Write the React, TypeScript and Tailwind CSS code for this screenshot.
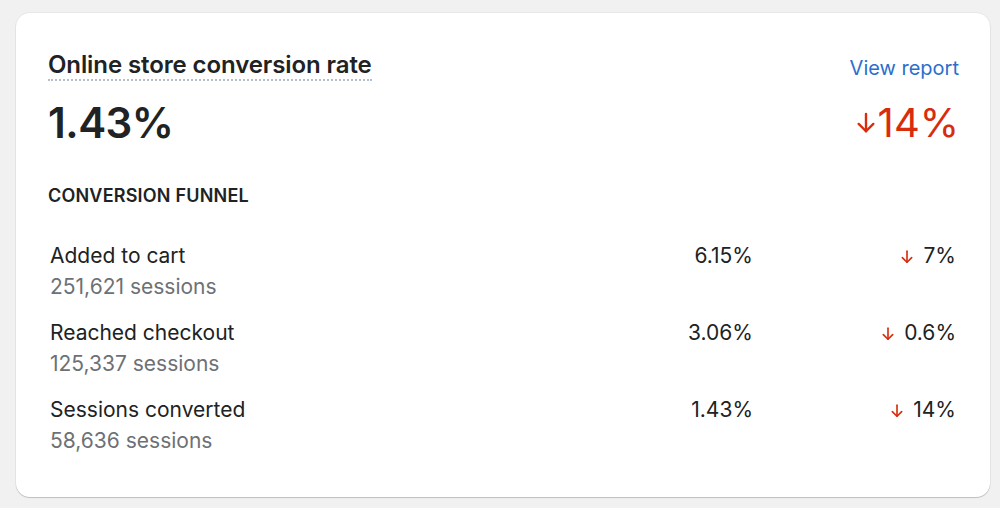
const rows = [
  { label: "Added to cart", sessions: "251,621 sessions", value: "6.15%", change: "7%" },
  { label: "Reached checkout", sessions: "125,337 sessions", value: "3.06%", change: "0.6%" },
  { label: "Sessions converted", sessions: "58,636 sessions", value: "1.43%", change: "14%" },
];

function DownArrow({ className, width = 2.4 }: { className?: string; width?: number }) {
  return (
    <svg viewBox="0 0 24 24" fill="none" stroke="currentColor" strokeWidth={width} strokeLinecap="round" strokeLinejoin="round" className={className}>
      <path d="M12 2v19" />
      <path d="M4 13l8 8 8-8" />
    </svg>
  );
}

export default function App() {
  return (
    <div className="min-h-screen bg-[#f1f1f1] pl-4 pr-[10px] pt-[13px] font-['Inter',sans-serif] text-[#202223]">
      <div className="rounded-[14px] bg-white pl-8 pr-[31px] pt-[38px] pb-[43px] shadow-[0_1px_1px_rgba(0,0,0,0.18),0_0_0_1px_rgba(0,0,0,0.04)]">
        <div className="flex items-start justify-between">
          <h2 className="border-b-2 border-dotted border-[#b4bfcc] text-[24px] font-semibold leading-[28px] tracking-[-0.1px]">
            Online store conversion rate
          </h2>
          <a className="mt-[3px] text-[20px] leading-[28px] text-[#2c6ecb]">View report</a>
        </div>
        <div className="mt-[15px] flex items-center justify-between">
          <div className="text-[42px] font-semibold leading-[52px] tracking-[-0.5px]">1.43%</div>
          <div className="flex items-center text-[40px] leading-[52px] text-[#d82c0d]">
            <DownArrow className="mr-[1px] h-[30px] w-[22px]" width={2.6} />
            14%
          </div>
        </div>
        <div className="mt-[35px] text-[18px] font-semibold uppercase leading-[24px] tracking-[0.2px]">Conversion funnel</div>
        <div className="mt-[35px] flex flex-col gap-[20px]">
          {rows.map((r) => (
            <div key={r.label} className="grid grid-cols-[1fr_200px_206px] pl-[2px] text-[21px] leading-[26px]">
              <div>
                <div>{r.label}</div>
                <div className="mt-[5px] text-[#6d7175]">{r.sessions}</div>
              </div>
              <div className="text-right">{r.value}</div>
              <div className="flex items-start justify-end pr-[3px]">
                <DownArrow className="mr-[9px] mt-[6px] h-[16px] w-[14px] text-[#d82c0d]" width={2.8} />
                {r.change}
              </div>
            </div>
          ))}
        </div>
      </div>
    </div>
  );
}
